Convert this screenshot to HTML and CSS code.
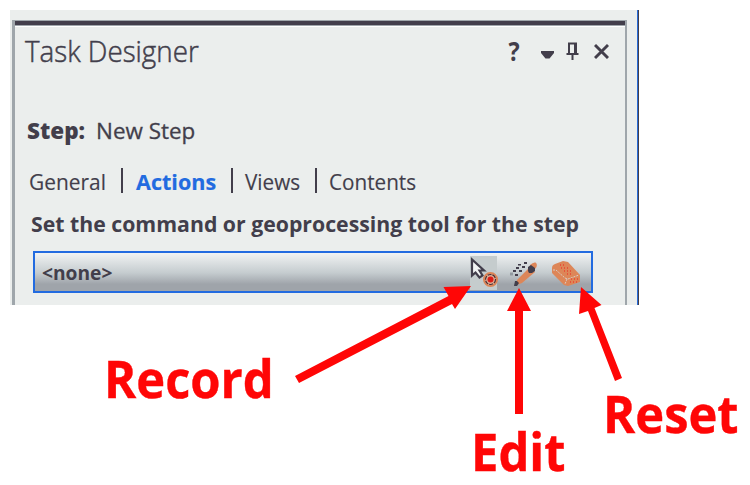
FILE: index.html
```html
<!DOCTYPE html>
<html lang="en">
<head>
<meta charset="utf-8">
<title>Task Designer</title>
<link rel="stylesheet" href="styles.css">
</head>
<body>
<main class="panel">
  <section class="pane">
    <header class="head">
      <h1><span class="fit title">Task Designer</span></h1>
      <div class="controls">
        <span class="help">?</span>
        <svg class="caret" width="13" height="8" viewBox="0 0 13 8"><path d="M0 0h13v2L8.500 7.500h-4L0 2z" fill="#423e4b"/></svg>
        <svg class="pin" width="13" height="19" viewBox="0 0 13 19"><path d="M3 12V1.500h7V12M0.500 12h12M6.500 12v6" fill="none" stroke="#423e4b" stroke-width="2"/><path d="M8 1h2.500v11H8z" fill="#423e4b"/></svg>
        <svg class="close" width="15" height="15" viewBox="0 0 15 15"><path d="M1 1l13 13M14 1L1 14" stroke="#423e4b" stroke-width="2.900"/></svg>
      </div>
    </header>
    <div class="step"><b><span class="fit step-label">Step:</span></b><span class="fit step-name">New Step</span></div>
    <nav class="tabs">
      <a class="tab general"><span class="fit">General</span></a>
      <a class="tab actions"><span class="fit">Actions</span></a>
      <a class="tab views"><span class="fit">Views</span></a>
      <a class="tab contents"><span class="fit">Contents</span></a>
    </nav>
    <p class="prompt"><span class="fit">Set the command or geoprocessing tool for the step</span></p>
    <div class="bar">
      <span class="fit value">&lt;none&gt;</span>
      <svg class="tools" width="112" height="34" viewBox="0 0 112 34">
        <path d="M0 0h27v34H0z" fill="#c5cccd"/>
        <path d="M2 3.500v16l3.500-3 4 5 3-2-3-5h4.500z" fill="#f2f4f4" stroke="#423e4b" stroke-width="2.200"/>
        <circle cx="20.500" cy="23.500" r="6.500" fill="#dfae95" stroke="#dc8557" stroke-width="2"/>
        <circle cx="20.500" cy="23.500" r="5" fill="none" stroke="#4a3035" stroke-width="1.200" stroke-dasharray="4 1"/>
        <circle cx="20.500" cy="23.500" r="3" fill="#dc1d16"/>
        <g fill="#423e4b"><path d="M48 8h3v1.500h-3zM54 6h3v2h-3zM46 11h3v2h-3zM52 10h3v2h-3zM43 14h3v2h-3zM49 14h3v2h-3zM45 18h3v2h-3z"/></g>
        <path d="M40 16.500h3v3h-3z" fill="#929aa0"/>
        <path d="M47 24L60 11l5 5-13 11-4 1.500q-2-1-1-4.500z" fill="#dd8658"/>
        <path d="M60 9q3-3 5.500-2.500 2 1 1 4.500l-3 4-4-3z" fill="#dd8658"/>
        <path d="M58 11l3-2 4 3v3l-3 2h-3l-1-2z" fill="#423e4b"/><path d="M45 25h2l2 2-2 3h-3z" fill="#423e4b"/>
        <path d="M82 12q0-3 3-4l8-3 5 1 12 13v7l-12 4-4-1-12-12z" fill="#dd8658"/>
        <path d="M83 14l3 0 9 8 3 1 11-4M97 23l-2 5" fill="none" stroke="#d9cbc4" stroke-width="1" stroke-dasharray="2 1"/>
        <path d="M90 9h6M91 12h9M94 15h9M97 18h6M101 23h7M100 26h7" stroke="#ef211c" stroke-width="1" stroke-dasharray="1 2"/>
      </svg>
    </div>
  </section>
</main>
<svg class="arrows" width="750" height="485" viewBox="0 0 750 485">
  <g fill="#ff0606"><path d="M471 286L443.500 287l5 9L295 376l4 7 153-79 3 5z"/><path d="M519 288l12 23h-8v103h-8V311h-8z"/><path d="M581 287l20.500 18-7 3L622 378l-7 3-27-70-9 3z"/></g>
</svg>
<span class="callout record"><span class="fit">Record</span></span>
<span class="callout edit"><span class="fit">Edit</span></span>
<span class="callout reset"><span class="fit">Reset</span></span>
</body>
</html>
```
FILE: styles.css
```css
* { box-sizing: border-box; }
body { margin: 0; width: 750px; height: 485px; overflow: hidden; background: #fff; color: #423e4b; font-family: "Open Sans", sans-serif; }
.fit { display: inline-block; transform-origin: 0 50%; white-space: nowrap; }
.panel { width: 629px; height: 295px; margin: 10px 0 0 10px; padding: 10px 11px 0 2px; background: #ebeeed; border-right: 1px solid #423e4b; box-shadow: inset -1px 0 #286bd8; }
.pane { height: 285px; border: solid #9fa6ab; border-width: 1px 2px 0 3px; box-shadow: inset 0 4px #423e4b, inset 0 5px #9fa6ab, inset 0 6px #fff; padding: 5px 0 0 9px; }
.head { height: 52px; display: flex; justify-content: space-between; }
h1 { margin: 4px 0 0; font-size: 30px; line-height: 41px; font-weight: 300; -webkit-text-stroke: .5px #423e4b; }
.title { transform: translateX(1px) scaleX(.925); }
.controls { display: flex; align-items: flex-start; padding-right: 16px; }
.help { font-size: 26px; font-weight: 700; line-height: 30px; margin: 10px 20px 0 0; transform: translateX(-1px) scaleX(.9); }
.caret { margin: 25px 12px 0 0; }
.pin { margin: 16px 15px 0 0; }
.close { margin: 18px 0 0; }
.step { display: flex; height: 56px; margin-top: 30px; font-size: 22px; line-height: 44px; padding-left: 3px; }
.step b { width: 69px; font-weight: 800; }
.step-label { transform: scaleX(1.02); }
.step-name { transform: scaleX(1.02); -webkit-text-stroke: .3px; }
.tabs { display: flex; margin-top: 4px; padding-left: 4px; height: 28px; font-size: 22px; line-height: 26px; -webkit-text-stroke: .15px; }
.tab + .tab::before { content: ""; align-self: flex-start; width: 2px; height: 25px; margin: 0 12px 0 0; background: #423e4b; }
.tab { display: flex; }
.general { width: 93px; }
.general .fit { transform: translateX(1px) scaleX(.95); }
.actions { width: 110px; color: #226be0; font-weight: 700; }
.actions .fit { transform: translateX(1px) scaleX(.98); }
.views { width: 84px; }
.views .fit { transform: scaleX(.94); }
.contents .fit { transform: scaleX(.94); }
.prompt { margin: 13px 0 0; padding-left: 6px; height: 28px; font-size: 22px; line-height: 28px; font-weight: 700; }
.prompt .fit { transform: translateX(1px) scaleX(.966); }
.bar { margin: 14px 0 0 9px; width: 560px; height: 42px; border: 2px solid #226be0; display: flex; justify-content: space-between; padding: 3px 9px 0 7px; background: linear-gradient(#f1f3f3, #c5cccf 52%, #9fa4aa 82%, #9fa4aa); font-size: 19px; line-height: 34px; font-weight: 700; }
.value { transform: scaleX(1.01); }
.arrows { position: absolute; left: 0; top: 0; }
.callout { position: absolute; color: #ff0606; font: 700 52px/60px "Open Sans", sans-serif; -webkit-text-stroke: .4px; }
.record { left: 104px; top: 348px; }
.edit { left: 471px; top: 421px; }
.reset { left: 603px; top: 383px; }
.callout .fit { transform: scaleX(.94); }
```
